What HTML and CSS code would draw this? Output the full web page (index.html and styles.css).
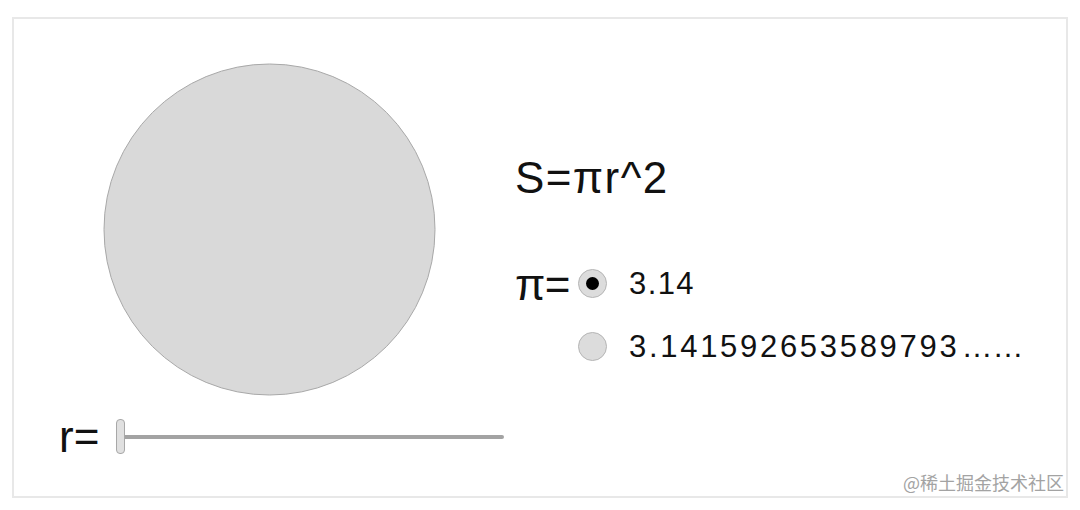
FILE: index.html
```html
<!DOCTYPE html>
<html>
<head>
	<meta charset='utf-8'/>
	<title>圆的面积</title>
	<link rel="stylesheet" href="styles.css">
</head>
<body>
	<div class="frame">
		<div class="top">
			<div class="circle_box">
				<svg class="circle" width="333" height="333" viewBox="0 0 333 333">
					<circle cx="166.5" cy="166.5" r="165.5" fill="#d9d9d9" stroke="#a8a8a8" stroke-width="1"/>
				</svg>
			</div>
			<div class="panel">
				<div class="formula">S=πr^2</div>
				<div class="choices">
					<span class="pi">π=</span>
					<span class="radio checked"></span>
					<span class="val">3.14</span>
					<span></span>
					<span class="radio"></span>
					<span class="val long">3.141592653589793<span class="dots">……</span></span>
				</div>
			</div>
		</div>
		<div class="slider_row">
			<span class="r_label">r=</span>
			<div class="slider">
				<div class="track"></div>
				<div class="thumb"></div>
			</div>
		</div>
		<div class="mark">@稀土掘金技术社区</div>
	</div>
</body>
</html>
```

FILE: styles.css
```css
*{
	margin: 0;
	padding: 0;
}
body{
	background: #fff;
	font-family: "Liberation Sans", Arial, sans-serif;
	color: #111;
}
.frame{
	position: relative;
	box-sizing: border-box;
	width: 1056px;
	height: 481px;
	margin: 17px 0 0 12px;
	border: 2px solid #e8e8e8;
}
.top{
	display: flex;
	padding-top: 44px;
}
.circle_box{
	padding-left: 89px;
	height: 333px;
}
.circle{
	display: block;
}
.panel{
	margin-left: 79px;
}
.formula{
	margin-top: 90px;
	font-size: 44px;
	line-height: 50px;
	letter-spacing: 1.4px;
}
.choices{
	display: grid;
	grid-template-columns: 62px 29px auto;
	grid-auto-rows: 63px;
	align-items: center;
	margin-top: 49px;
}
.pi{
	font-size: 44px;
	line-height: 50px;
	letter-spacing: -0.5px;
	position: relative;
	top: 1px;
}
.radio{
	display: block;
	box-sizing: border-box;
	width: 29px;
	height: 29px;
	border-radius: 50%;
	background: #dcdcdc;
	border: 1px solid #b5b5b5;
	position: relative;
	left: 1px;
}
.radio.checked::after{
	content: '';
	position: absolute;
	left: 7px;
	top: 7px;
	width: 13px;
	height: 13px;
	border-radius: 50%;
	background: #000;
}
.val{
	margin-left: 23px;
	font-size: 31px;
	letter-spacing: 1.4px;
}
.val.long{
	letter-spacing: 2.7px;
}
.dots{
	letter-spacing: 0;
	margin-left: 2px;
}
.slider_row{
	display: flex;
	align-items: center;
	padding-left: 45px;
	margin-top: 21px;
	height: 40px;
}
.r_label{
	font-size: 44px;
	line-height: 40px;
}
.slider{
	position: relative;
	margin-left: 17px;
	width: 388px;
	height: 36px;
}
.track{
	position: absolute;
	left: 2px;
	right: 0;
	top: 16px;
	height: 4px;
	border-radius: 2px;
	background: #a3a3a3;
}
.thumb{
	position: absolute;
	left: 0;
	top: 0;
	box-sizing: border-box;
	width: 9px;
	height: 35px;
	border-radius: 4px;
	background: #e0e0e0;
	border: 1px solid #a8a8a8;
}
.mark{
	position: absolute;
	right: 2px;
	bottom: 2px;
	font-family: "Noto Sans CJK SC", sans-serif;
	font-size: 18px;
	line-height: 24px;
	color: #a3a3a3;
}
```
